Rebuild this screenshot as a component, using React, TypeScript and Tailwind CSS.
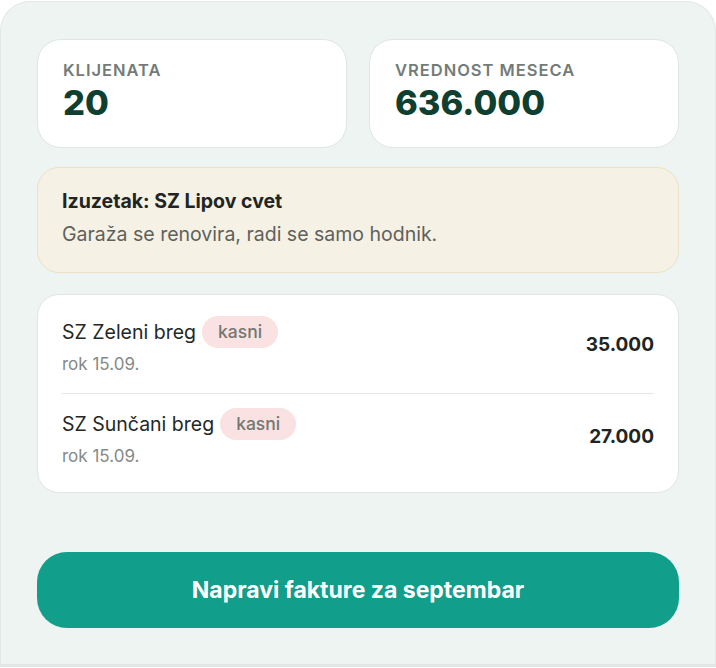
export default function App() {
  const rows = [
    { name: "SZ Zeleni breg", due: "rok 15.09.", amount: "35.000" },
    { name: "SZ Sunčani breg", due: "rok 15.09.", amount: "27.000" },
  ];

  return (
    <div className="h-[668px] w-[716px] overflow-hidden bg-white font-['Inter',sans-serif]">
      <div className="mt-[1px] flex h-[663px] flex-col rounded-t-[30px] border border-b-0 border-[#e2e8e6] bg-[#eef4f2] px-[36px] pt-[37px]">
        {/* Stats */}
        <div className="grid grid-cols-2 gap-[22px]">
          <div className="h-[109px] rounded-[24px] border border-[#e0e6e4] bg-white px-[25px] pt-[18px]">
            <p className="text-[16.5px] font-semibold uppercase leading-[24px] tracking-[0.06em] text-[#737b78]">
              Klijenata
            </p>
            <p className="text-[34.5px] font-extrabold leading-[42px] text-[#0f3f31]">20</p>
          </div>
          <div className="h-[109px] rounded-[24px] border border-[#e0e6e4] bg-white px-[25px] pt-[18px]">
            <p className="text-[16.5px] font-semibold uppercase leading-[24px] tracking-[0.06em] text-[#737b78]">
              Vrednost meseca
            </p>
            <p className="text-[34.5px] font-extrabold leading-[42px] text-[#0f3f31]">636.000</p>
          </div>
        </div>

        {/* Exception note */}
        <div className="mt-[19px] h-[106px] rounded-[22px] border border-[#ebe1c4] bg-[#f6f1e5] px-[24px] pt-[20px]">
          <p className="text-[19.5px] font-bold leading-[26px] text-[#1e2522]">
            Izuzetak: SZ Lipov cvet
          </p>
          <p className="mt-[7px] text-[19.5px] leading-[26px] text-[#5d615c]">
            Garaža se renovira, radi se samo hodnik.
          </p>
        </div>

        {/* Late list */}
        <div className="mt-[21px] rounded-[22px] border border-[#e0e6e4] bg-white px-[24px] py-[7px]">
          {rows.map((r, i) => (
            <div
              key={r.name}
              className={[
                "flex items-center justify-between pt-[14px] pb-[18px]",
                i > 0 ? "border-t border-[#e3e7e6]" : "",
              ].join(" ")}
            >
              <div className="flex flex-col">
                <div className="flex items-center gap-[6px]">
                  <span className="text-[19.5px] leading-[32px] text-[#232826]">{r.name}</span>
                  <span className="rounded-full bg-[#fbe2e2] px-[16px] text-[17.5px] font-medium leading-[32px] text-[#737873]">
                    kasni
                  </span>
                </div>
                <span className="mt-[5px] text-[17px] leading-[22px] text-[#858a87]">{r.due}</span>
              </div>
              <span className="text-[19px] font-bold text-[#1e2522]">{r.amount}</span>
            </div>
          ))}
        </div>

        {/* Action */}
        <button
          type="button"
          className="mt-[59px] h-[76px] w-full rounded-[30px] bg-[#119e8a] text-[23px] font-bold text-white"
        >
          Napravi fakture za septembar
        </button>
      </div>
      <div className="h-[3px] bg-[#e2e7e5]" />
    </div>
  );
}
